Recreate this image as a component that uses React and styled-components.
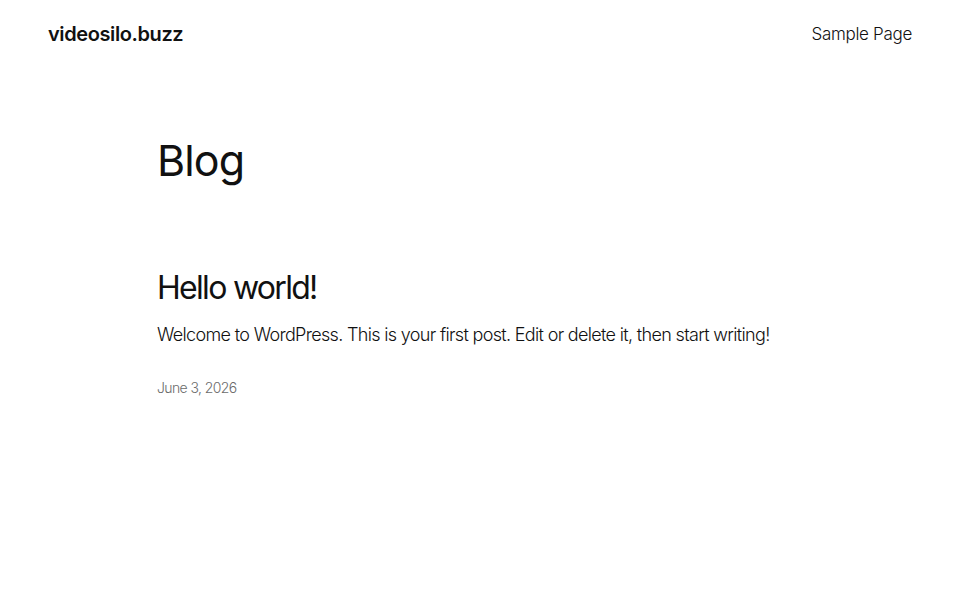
import React from 'react';
import styled, { createGlobalStyle } from 'styled-components';

const Global = createGlobalStyle`
  html, body { margin: 0; padding: 0; background: #fff; }
  body {
    font-family: Inter, "Noto Sans", sans-serif;
    color: #111;
    -webkit-font-smoothing: antialiased;
  }
`;

const Page = styled.div`
  min-height: 600px;
  display: flex;
  flex-direction: column;
`;

const Header = styled.header`
  display: flex;
  justify-content: space-between;
  align-items: center;
  padding: 20px 48px;
  height: 28px;
`;

const SiteTitle = styled.a`
  font-size: 20px;
  font-weight: 600;
  letter-spacing: -0.4px;
  color: #111;
  text-decoration: none;
`;

const NavLink = styled.a`
  font-size: 17px;
  font-weight: 300;
  letter-spacing: -0.3px;
  color: #111;
  text-decoration: none;
`;

const Main = styled.main`
  width: 646px;
  margin: 0 auto;
  padding-top: 67px;
`;

const PageTitle = styled.h1`
  margin: 0;
  font-size: 43px;
  font-weight: 400;
  letter-spacing: -0.9px;
  line-height: 1.2;
`;

const Post = styled.article`
  margin-top: 81px;
`;

const PostTitle = styled.h2`
  margin: 0;
  font-size: 32px;
  font-weight: 400;
  letter-spacing: -1.7px;
  line-height: 1.24;
`;

const Excerpt = styled.p`
  margin: 14px 0 0;
  font-size: 18px;
  font-weight: 300;
  letter-spacing: -0.67px;
  line-height: 1.5;
`;

const PostDate = styled.time`
  display: block;
  margin-top: 31px;
  font-size: 14px;
  font-weight: 300;
  letter-spacing: -0.6px;
  color: #6b6b6b;
`;

export default function App() {
  return (
    <Page>
      <Global />
      <Header>
        <SiteTitle href="#">videosilo.buzz</SiteTitle>
        <NavLink href="#">Sample Page</NavLink>
      </Header>
      <Main>
        <PageTitle>Blog</PageTitle>
        <Post>
          <PostTitle>Hello world!</PostTitle>
          <Excerpt>Welcome to WordPress. This is your first post. Edit or delete it, then start writing!</Excerpt>
          <PostDate>June 3, 2026</PostDate>
        </Post>
      </Main>
    </Page>
  );
}
